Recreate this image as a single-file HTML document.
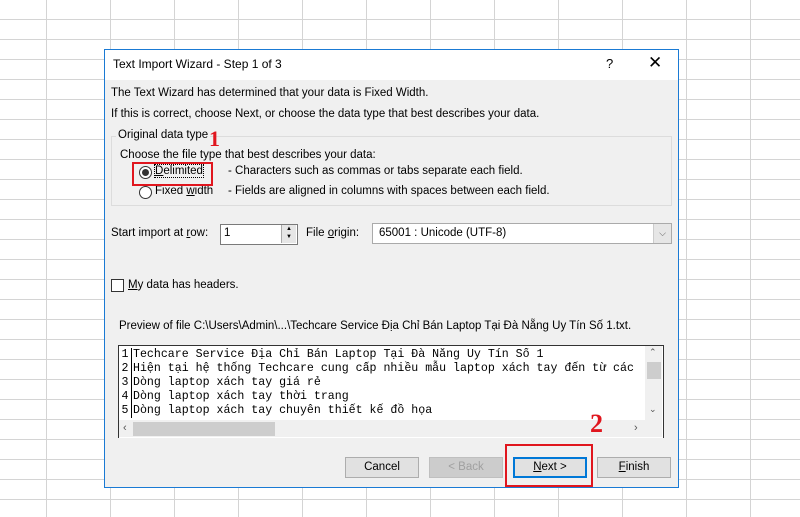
<!DOCTYPE html>
<html><head><style>
body{margin:0;width:800px;height:517px;overflow:hidden;background:#fff;font-family:"Liberation Sans",sans-serif;position:relative}
.grid{position:absolute;inset:0;background-image:linear-gradient(to right,#d4d4d4 1px,transparent 1px),linear-gradient(to bottom,#d4d4d4 1px,transparent 1px);background-size:64px 20px;background-position:46px 19px}
.a{position:absolute;font-size:11.5px;color:#000;white-space:nowrap}
.dlg{position:absolute;left:104px;top:49px;width:573px;height:437px;border:1px solid #1a7ad4;background:#f0f0f0}
.btn{position:absolute;top:457px;width:72px;height:19px;border:1px solid #adadad;background:#e1e1e1;font-size:11.5px;text-align:center;line-height:19px}
.mono{font-family:"Liberation Mono",monospace;font-size:11.6px;line-height:14px}
u{text-decoration:underline}
</style></head><body>
<div class="grid"></div>
<div class="dlg"></div>
<div style="position:absolute;left:105px;top:50px;width:573px;height:30px;background:#fff"></div>
<div class="a" style="left:113px;top:57px;font-size:12px">Text Import Wizard - Step 1 of 3</div>
<div class="a" style="left:606px;top:56px;font-size:13px">?</div>
<div class="a" style="left:648px;top:53px;font-size:17px">✕</div>
<div class="a" style="left:111px;top:87px">The Text Wizard has determined that your data is Fixed Width.</div>
<div class="a" style="left:111px;top:108px">If this is correct, choose Next, or choose the data type that best describes your data.</div>
<div style="position:absolute;left:111px;top:136px;width:559px;height:68px;border:1px solid #dcdcdc"></div>
<div class="a" style="left:116px;top:129px;background:#f0f0f0;padding:0 2px">Original data type</div>
<div class="a" style="left:120px;top:149px">Choose the file type that best describes your data:</div>
<div style="position:absolute;left:139px;top:166px;width:11px;height:11px;border:1px solid #333;border-radius:50%;background:#fff"></div>
<div style="position:absolute;left:142px;top:169px;width:7px;height:7px;border-radius:50%;background:#333"></div>
<div class="a" style="left:155px;top:165px;outline:1px dotted #000"><u>D</u>elimited</div>
<div class="a" style="left:228px;top:165px">- Characters such as commas or tabs separate each field.</div>
<div style="position:absolute;left:139px;top:186px;width:11px;height:11px;border:1px solid #333;border-radius:50%;background:#fff"></div>
<div class="a" style="left:155px;top:185px">Fixed <u>w</u>idth</div>
<div class="a" style="left:228px;top:185px">- Fields are aligned in columns with spaces between each field.</div>
<div style="position:absolute;left:132px;top:162px;width:77px;height:20px;border:2px solid #e0161e"></div>
<div class="a" style="left:209px;top:126px;font:bold 22px 'Liberation Serif',serif;color:#e0161e">1</div>
<div class="a" style="left:111px;top:227px">Start import at <u>r</u>ow:</div>
<div style="position:absolute;left:220px;top:224px;width:76px;height:19px;border:1px solid #7a7a7a;background:#fff"></div>
<div class="a" style="left:224px;top:227px">1</div>
<div style="position:absolute;left:281px;top:225px;width:14px;height:18px;background:#e6e6e6;border-left:1px solid #aaa;font-size:6px;text-align:center;line-height:8px">▲<br>▼</div>
<div class="a" style="left:306px;top:227px">File <u>o</u>rigin:</div>
<div style="position:absolute;left:372px;top:223px;width:298px;height:19px;border:1px solid #aaa;background:#fff"></div>
<div style="position:absolute;left:653px;top:224px;width:17px;height:19px;background:#e6e6e6;border-left:1px solid #ccc;font-size:9px;text-align:center;line-height:19px;color:#555">⌵</div>
<div class="a" style="left:379px;top:227px">65001 : Unicode (UTF-8)</div>
<div style="position:absolute;left:111px;top:279px;width:11px;height:11px;border:1px solid #333;background:#fff"></div>
<div class="a" style="left:128px;top:279px"><u>M</u>y data has headers.</div>
<div class="a" style="left:119px;top:320px">Preview of file C:\Users\Admin\...\Techcare Service Địa Chỉ Bán Laptop Tại Đà Nẵng Uy Tín Số 1.txt.</div>
<div style="position:absolute;left:118px;top:345px;width:544px;height:92px;background:#fff;border:1px solid #333;border-bottom:none;overflow:hidden"></div>
<div class="mono" style="position:absolute;left:119px;top:348px;width:12px;border-right:1px solid #000;text-align:center">1<br>2<br>3<br>4<br>5</div>
<div class="mono a" style="left:133px;top:348px;width:511px;overflow:hidden">Techcare Service Địa Chỉ Bán Laptop Tại Đà Nẵng Uy Tín Số 1<br>Hiện tại hệ thống Techcare cung cấp nhiều mẫu laptop xách tay đến từ các<br>Dòng laptop xách tay giá rẻ<br>Dòng laptop xách tay thời trang<br>Dòng laptop xách tay chuyên thiết kế đồ họa</div>
<div style="position:absolute;left:645px;top:346px;width:17px;height:74px;background:#f0f0f0"></div>
<div style="position:absolute;left:647px;top:362px;width:14px;height:17px;background:#cdcdcd"></div>
<div class="a" style="left:649px;top:347px;font-size:9px;color:#555">⌃</div>
<div class="a" style="left:649px;top:404px;font-size:9px;color:#555">⌄</div>
<div style="position:absolute;left:119px;top:420px;width:543px;height:17px;background:#f0f0f0"></div>
<div style="position:absolute;left:133px;top:422px;width:142px;height:14px;background:#cdcdcd"></div>
<div class="a" style="left:123px;top:422px;font-size:11px;color:#555">‹</div>
<div class="a" style="left:634px;top:422px;font-size:11px;color:#555">›</div>
<div class="btn" style="left:345px">Cancel</div>
<div class="btn" style="left:429px;color:#a0a0a0;background:#ccc;border-color:#bfbfbf">&lt; Back</div>
<div class="btn" style="left:513px;border:2px solid #0078d7;width:70px;height:17px;line-height:17px"><u>N</u>ext &gt;</div>
<div class="btn" style="left:597px"><u>F</u>inish</div>
<div style="position:absolute;left:505px;top:444px;width:84px;height:39px;border:2px solid #e0161e"></div>
<div class="a" style="left:590px;top:409px;font:bold 26px 'Liberation Serif',serif;color:#e0161e">2</div>
</body></html>
